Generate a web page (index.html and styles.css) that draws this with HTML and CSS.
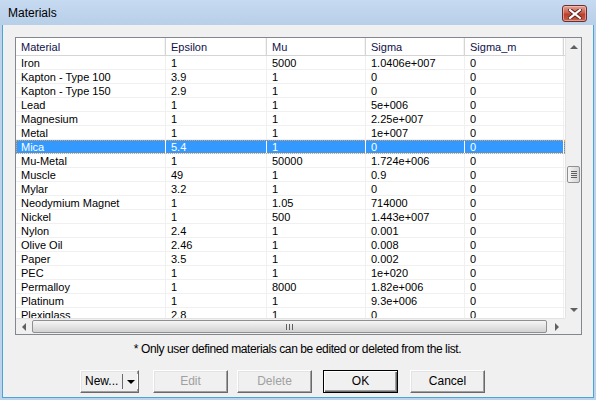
FILE: index.html
```html
<!DOCTYPE html>
<html lang="en">
<head>
  <meta charset="UTF-8">
  <title>Materials</title>
  <link rel="stylesheet" href="styles.css">
</head>
<body>
  <div class="window">
    <div class="titlebar">
      <span class="title">Materials</span>
      <div class="close">
        <svg width="14" height="10" viewBox="0 0 14 10">
          <path d="M2 1 L12 9 M12 1 L2 9" stroke="#5a2020" stroke-width="4" stroke-linecap="square"/>
          <path d="M2 1 L12 9 M12 1 L2 9" stroke="#fff" stroke-width="2.2" stroke-linecap="square"/>
        </svg>
      </div>
    </div>
    <div class="client">
      <div class="listbox">
        <div class="list">
          <div class="row head">
            <span>Material</span><span>Epsilon</span><span>Mu</span><span>Sigma</span><span>Sigma_m</span>
          </div>
          <div class="row"><span>Iron</span><span>1</span><span>5000</span><span>1.0406e+007</span><span>0</span></div>
          <div class="row"><span>Kapton - Type 100</span><span>3.9</span><span>1</span><span>0</span><span>0</span></div>
          <div class="row"><span>Kapton - Type 150</span><span>2.9</span><span>1</span><span>0</span><span>0</span></div>
          <div class="row"><span>Lead</span><span>1</span><span>1</span><span>5e+006</span><span>0</span></div>
          <div class="row"><span>Magnesium</span><span>1</span><span>1</span><span>2.25e+007</span><span>0</span></div>
          <div class="row"><span>Metal</span><span>1</span><span>1</span><span>1e+007</span><span>0</span></div>
          <div class="row selected"><span>Mica</span><span>5.4</span><span>1</span><span>0</span><span>0</span></div>
          <div class="row"><span>Mu-Metal</span><span>1</span><span>50000</span><span>1.724e+006</span><span>0</span></div>
          <div class="row"><span>Muscle</span><span>49</span><span>1</span><span>0.9</span><span>0</span></div>
          <div class="row"><span>Mylar</span><span>3.2</span><span>1</span><span>0</span><span>0</span></div>
          <div class="row"><span>Neodymium Magnet</span><span>1</span><span>1.05</span><span>714000</span><span>0</span></div>
          <div class="row"><span>Nickel</span><span>1</span><span>500</span><span>1.443e+007</span><span>0</span></div>
          <div class="row"><span>Nylon</span><span>2.4</span><span>1</span><span>0.001</span><span>0</span></div>
          <div class="row"><span>Olive Oil</span><span>2.46</span><span>1</span><span>0.008</span><span>0</span></div>
          <div class="row"><span>Paper</span><span>3.5</span><span>1</span><span>0.002</span><span>0</span></div>
          <div class="row"><span>PEC</span><span>1</span><span>1</span><span>1e+020</span><span>0</span></div>
          <div class="row"><span>Permalloy</span><span>1</span><span>8000</span><span>1.82e+006</span><span>0</span></div>
          <div class="row"><span>Platinum</span><span>1</span><span>1</span><span>9.3e+006</span><span>0</span></div>
          <div class="row"><span>Plexiglass</span><span>2.8</span><span>1</span><span>0</span><span>0</span></div>
        </div>
        <div class="vscroll">
          <div class="sbtn"><span class="arr up"></span></div>
          <div class="vtrack"><div class="vthumb"><i></i><i></i><i></i><i></i></div></div>
          <div class="sbtn"><span class="arr down"></span></div>
        </div>
        <div class="hscroll">
          <div class="sbtn"><span class="arr left"></span></div>
          <div class="htrack"><div class="hthumb"><i></i><i></i><i></i></div></div>
          <div class="sbtn"><span class="arr right"></span></div>
        </div>
        <div class="corner"></div>
      </div>
      <p class="note">* Only user defined materials can be edited or deleted from the list.</p>
      <div class="buttons">
        <div class="btn split"><span class="lbl">New...</span><span class="drop"><span class="tri"></span></span></div>
        <div class="btn disabled b-edit">Edit</div>
        <div class="btn disabled b-delete">Delete</div>
        <div class="btn default b-ok">OK</div>
        <div class="btn b-cancel">Cancel</div>
      </div>
    </div>
  </div>
</body>
</html>
```

FILE: styles.css
```css
* {
  margin: 0;
  padding: 0;
  box-sizing: border-box;
}
body {
  font-family: "Liberation Sans", Arial, sans-serif;
  background: #fff;
}
.window {
  width: 596px;
  height: 400px;
  background: #bcd3ec;
  padding: 0 2px 2px 2px;
  display: flex;
  flex-direction: column;
}
.titlebar {
  height: 25px;
  display: flex;
  align-items: flex-start;
  justify-content: space-between;
  background: linear-gradient(#c6daf0, #b8cfe9);
  margin: 0 -2px;
  padding: 0 9px 0 8px;
}
.title {
  font-size: 12px;
  line-height: 13px;
  margin-top: 7px;
  color: #000;
}
.close {
  width: 25px;
  height: 17px;
  margin-top: 5px;
  border: 1px solid #6b2d2d;
  border-radius: 3px;
  background: linear-gradient(#e3a396, #cc5f4c 45%, #b8402c 55%, #c8604a);
  box-shadow: inset 0 0 0 1px rgba(255, 220, 210, 0.5);
  display: flex;
  align-items: center;
  justify-content: center;
}
.client {
  flex: 1;
  background: #f0f0f0;
  border: 1px solid #4ba3d6;
  border-top: none;
  padding: 12px 11px 0 12px;
}
.listbox {
  width: 567px;
  height: 298px;
  border: 1px solid #828790;
  background: #fff;
  display: grid;
  grid-template-columns: 549px 16px;
  grid-template-rows: 280px 16px;
}
.list {
  overflow: hidden;
  font-size: 11px;
  color: #000;
}
.row {
  display: grid;
  grid-template-columns: 150px 101px 99px 99px 99px;
  height: 14px;
  line-height: 13px;
  border-bottom: 1px solid #f0f0f0;
}
.row span {
  padding: 1px 0 0 5px;
  border-right: 1px solid #f0f0f0;
  white-space: nowrap;
  overflow: hidden;
}
.row.head {
  height: 18px;
  line-height: 16px;
  border-bottom: 1px solid #d5d5d5;
  background: #fff;
  color: #10104a;
}
.row.head span {
  border-right: 1px solid #d5d5d5;
  box-shadow: inset -1px 0 0 #f4f4f4;
}
.row.selected {
  background: #3399ff;
  color: #fff;
  outline: 1px dotted #f0a040;
  outline-offset: -1px;
}
.row.selected span {
  border-right-color: #fff;
}
.vscroll {
  grid-row: 1;
  grid-column: 2;
  display: flex;
  flex-direction: column;
  background: #f0f0f0;
  border-left: 1px solid #e3e3e3;
}
.hscroll {
  grid-row: 2;
  grid-column: 1;
  display: flex;
  background: #f0f0f0;
  border-top: 1px solid #e3e3e3;
}
.corner {
  background: #f0f0f0;
}
.sbtn {
  width: 16px;
  height: 17px;
  flex: none;
  display: flex;
  align-items: center;
  justify-content: center;
}
.hscroll .sbtn {
  height: 15px;
}
.vtrack {
  flex: 1;
  padding-top: 111px;
  display: flex;
  justify-content: center;
}
.vthumb {
  width: 13px;
  height: 17px;
  border: 1px solid #8e8f8f;
  border-radius: 2px;
  background: linear-gradient(90deg, #f6f6f6, #e4e4e4 50%, #d6d6d6);
  display: flex;
  flex-direction: column;
  align-items: center;
  justify-content: center;
  gap: 1px;
}
.vthumb i {
  width: 6px;
  height: 1px;
  background: #5f5f5f;
}
.htrack {
  flex: 1;
  display: flex;
  align-items: center;
  padding-right: 2px;
}
.hthumb {
  flex: 1;
  height: 13px;
  border: 1px solid #8e8f8f;
  border-radius: 2px;
  background: linear-gradient(#f6f6f6, #e4e4e4 50%, #d2d2d2);
  display: flex;
  align-items: center;
  justify-content: center;
  gap: 2px;
}
.hthumb i {
  width: 1px;
  height: 6px;
  background: #5f5f5f;
}
.arr {
  width: 0;
  height: 0;
  border: 4px solid transparent;
}
.arr.up {
  border-bottom: 4px solid #606060;
  border-top-width: 0;
}
.arr.down {
  border-top: 4px solid #606060;
  border-bottom-width: 0;
}
.arr.left {
  border-right: 4px solid #606060;
  border-left-width: 0;
}
.arr.right {
  border-left: 4px solid #606060;
  border-right-width: 0;
}
.note {
  font-size: 12px;
  text-align: center;
  margin-top: 6px;
  height: 16px;
  line-height: 16px;
  padding-right: 2px;
  letter-spacing: -0.4px;
}
.buttons {
  display: flex;
  margin-top: 13px;
  padding-left: 65px;
}
.btn {
  width: 75px;
  height: 23px;
  font-size: 12px;
  line-height: 21px;
  text-align: center;
  background: #f0f0f0;
  border: 1px solid;
  border-color: #fff #696969 #696969 #fff;
  box-shadow: inset -1px -1px 0 #a0a0a0, inset 1px 1px 0 #e3e3e3;
  color: #000;
}
.btn.disabled {
  color: #a0a0a0;
}
.btn.default {
  border: 1px solid #000;
  box-shadow: inset 1px 1px 0 #fff, inset -1px -1px 0 #696969, inset -2px -2px 0 #a0a0a0;
}
.split {
  width: 59px;
  display: flex;
  text-align: left;
}
.split .lbl {
  width: 41px;
  padding-left: 4px;
}
.split .drop {
  flex: 1;
  border-left: 1px solid #696969;
  box-shadow: -1px 0 0 #fff inset;
  margin: 3px 0;
  display: flex;
  align-items: center;
  justify-content: center;
}
.split .tri {
  width: 0;
  height: 0;
  border: 4px solid transparent;
  border-top: 4px solid #000;
  border-bottom-width: 0;
}
.b-edit {
  margin-left: 14px;
}
.b-delete {
  margin-left: 9px;
}
.b-ok {
  margin-left: 11px;
}
.b-cancel {
  margin-left: 12px;
}
```
